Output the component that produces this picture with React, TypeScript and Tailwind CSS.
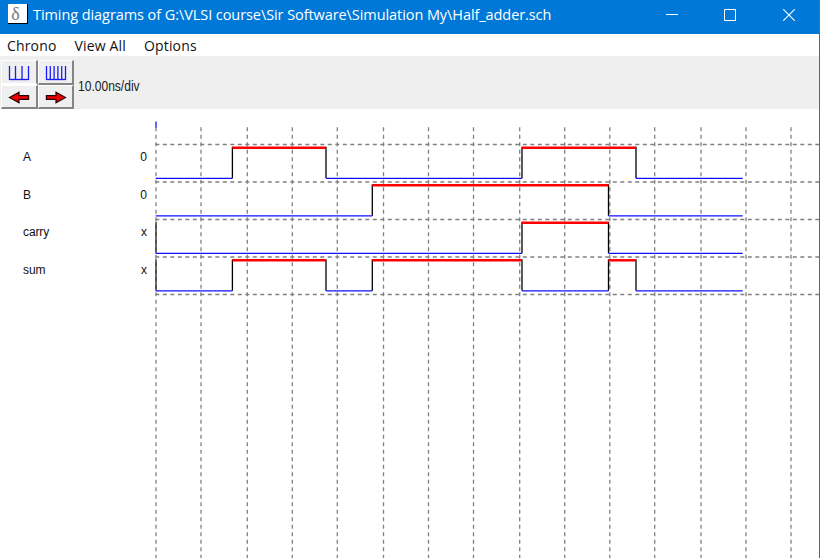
import React from "react";

const GRID_X = [156, 201, 247.3, 292.3, 337.3, 383.5, 428.5, 473.5, 519.7, 564.7, 609.8, 654.7, 701, 746, 791];
const GRID_Y = [144.5, 182, 219.5, 257, 294.5];
const END = 742.7;

type Signal = { name: string; value: string; edges: number[]; unknownStart?: boolean };

const SIGNALS: Signal[] = [
  { name: "A", value: "0", edges: [232.4, 326, 522, 636] },
  { name: "B", value: "0", edges: [372.3, 608.5] },
  { name: "carry", value: "x", edges: [522, 608.5], unknownStart: true },
  { name: "sum", value: "x", edges: [232.4, 326, 372.3, 522, 608.5, 636], unknownStart: true },
];

function Wave({ signal, index }: { signal: Signal; index: number }) {
  const high = 147.8 + index * 37.5;
  const low = 178.3 + index * 37.5;
  const points = [155.7, ...signal.edges, END];
  return (
    <g>
      {signal.unknownStart && <path d={`M156 ${high - 1}V${low}`} stroke="#222" strokeWidth="1.3" />}
      {signal.edges.map((x) => (
        <path key={x} d={`M${x} ${high - 1}V${low}`} stroke="#000" strokeWidth="1.3" />
      ))}
      {points.slice(0, -1).map((x, i) => {
        const up = i % 2 === 1;
        return (
          <path
            key={x}
            d={`M${x} ${up ? high : low}H${points[i + 1]}`}
            stroke={up ? "#ff0000" : "#1010ff"}
            strokeWidth={up ? 2.5 : 1.3}
          />
        );
      })}
    </g>
  );
}

function ClockIcon({ bars }: { bars: number[] }) {
  return (
    <svg width="22" height="16" viewBox="0 0 22 16" fill="none" stroke="#1a1aff" strokeWidth="1.3" className="mt-0.5">
      <path d={`M${bars[0]} 14.5H${bars[bars.length - 1]}`} />
      {bars.map((x) => (
        <path key={x} d={`M${x} 1V15`} />
      ))}
    </svg>
  );
}

function ArrowIcon({ right }: { right?: boolean }) {
  return (
    <svg width="22" height="13" viewBox="0 0 22 13" className={right ? "mt-px -scale-x-100" : "mt-px"}>
      <path d="M1.5 6.5L11 1.3V4.6H20.6V8.4H11V11.7Z" fill="#f00000" stroke="#200000" strokeWidth="1.2" />
    </svg>
  );
}

const toolButton =
  "flex items-center justify-center border-t border-l border-r-2 border-t-white border-l-white border-r-[#858585] bg-[#efefef]";
const topButton = `${toolButton} border-b-2 border-b-[#858585]`;
const topLeftButton = `${toolButton} border-b-2 border-b-white`;

export default function App() {
  return (
    <div className="flex h-[558px] w-[820px] flex-col overflow-hidden border-r border-[#1979ca] bg-white font-['Open_Sans','Noto_Sans',sans-serif] text-black">
      <header className="flex h-[34px] shrink-0 items-start bg-[#0078d7] pl-2 text-white">
        <div className="mt-1 flex h-5 w-5 shrink-0 items-center justify-center border-r border-b border-black bg-white pr-1 font-['Liberation_Serif',serif] text-[18px] leading-none text-[#777]">
          δ
        </div>
        <h1 className="mt-[4px] ml-[5px] w-[600px] text-[14.5px] leading-[22px] font-normal tracking-[-0.075px] whitespace-nowrap">
          Timing diagrams of G:\VLSI course\Sir Software\Simulation My\Half_adder.sch
        </h1>
        <div className="ml-auto flex gap-[46px] pt-[9px] pr-[24px]">
          <svg width="12" height="12" viewBox="0 0 12 12" fill="none" stroke="#fff">
            <path d="M0 5.5H12" />
          </svg>
          <svg width="12" height="12" viewBox="0 0 12 12" fill="none" stroke="#fff">
            <path d="M.5 .5H11.5V11.5H.5Z" />
          </svg>
          <svg width="12" height="12" viewBox="0 0 12 12" fill="none" stroke="#fff" strokeWidth="1.1" className="ml-px">
            <path d="M.3 .3L11.7 11.7M11.7 .3L.3 11.7" />
          </svg>
        </div>
      </header>
      <nav className="flex h-[22px] shrink-0 items-center gap-[18px] pt-px pl-[7px] text-[14px] tracking-[0.16px] text-[#111]">
        <span>Chrono</span>
        <span>View All</span>
        <span>Options</span>
      </nav>
      <section className="flex h-[53px] shrink-0 items-start bg-[#efefef]">
        <div className="mt-1 grid grid-cols-[37px_36px] grid-rows-[25px_24px] pl-px">
          <button className={topLeftButton}><ClockIcon bars={[1.5, 7.5, 14, 20.5]} /></button>
          <button className={topButton}><ClockIcon bars={[1.5, 5.3, 9.1, 12.9, 16.7, 20.5]} /></button>
          <button className={topButton}><ArrowIcon /></button>
          <button className={topButton}><ArrowIcon right /></button>
        </div>
        <span className="mt-[19px] ml-1 origin-left scale-x-[0.86] font-['Liberation_Sans',sans-serif] text-[14px] leading-[22px] text-[#222]">
          10.00ns/div
        </span>
      </section>
      <main className="flex flex-1 font-['Liberation_Sans',sans-serif]">
        <div className="flex w-[155px] shrink-0 flex-col pt-[29.4px] text-[12px] text-[#111]">
          {SIGNALS.map((s) => (
            <div key={s.name} className="flex h-[37.5px] items-center justify-between pr-[8px] pl-[23px]">
              <span className="tracking-[-0.1px]">{s.name}</span>
              <span>{s.value}</span>
            </div>
          ))}
        </div>
        <svg width="664" height="449" viewBox="155 109 664 449" fill="none" className="shrink-0">
          {GRID_X.map((x) => (
            <path key={x} d={`M${x} 127.3V558`} stroke="#808080" strokeWidth="1.3" strokeDasharray="4 3.5" />
          ))}
          {GRID_Y.map((y) => (
            <path key={y} d={`M155.3 ${y}H819`} stroke="#808080" strokeWidth="1.3" strokeDasharray="4 3.5" />
          ))}
          <path d="M156 121.5V127.8" stroke="#3030ff" strokeWidth="1.5" />
          {SIGNALS.map((s, i) => (
            <Wave key={s.name} signal={s} index={i} />
          ))}
        </svg>
      </main>
    </div>
  );
}
